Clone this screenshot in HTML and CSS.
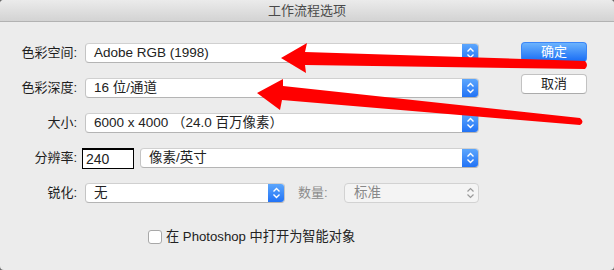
FILE: index.html
```html
<!DOCTYPE html>
<html lang="zh-CN">
<head>
<meta charset="utf-8">
<title>工作流程选项</title>
<link rel="stylesheet" href="styles.css">
</head>
<body>
<div class="window">
  <div class="titlebar">工作流程选项</div>
  <div class="content">
    <div class="form">
      <div class="row">
        <span class="lbl">色彩空间:</span>
        <div class="select w-full"><span class="val">Adobe RGB (1998)</span><span class="stepper"><svg width="17" height="20" viewBox="0 0 17 20"><path d="M5.5 8.5 L8.5 5.5 L11.5 8.5 M5.5 11.5 L8.5 14.5 L11.5 11.5" fill="none" stroke="#fff" stroke-width="1.4"/></svg></span></div>
      </div>
      <div class="row">
        <span class="lbl">色彩深度:</span>
        <div class="select w-full"><span class="val">16 位/通道</span><span class="stepper"><svg width="17" height="20" viewBox="0 0 17 20"><path d="M5.5 8.5 L8.5 5.5 L11.5 8.5 M5.5 11.5 L8.5 14.5 L11.5 11.5" fill="none" stroke="#fff" stroke-width="1.4"/></svg></span></div>
      </div>
      <div class="row">
        <span class="lbl">大小:</span>
        <div class="select w-full"><span class="val">6000 x 4000 （24.0 百万像素）</span><span class="stepper"><svg width="17" height="20" viewBox="0 0 17 20"><path d="M5.5 8.5 L8.5 5.5 L11.5 8.5 M5.5 11.5 L8.5 14.5 L11.5 11.5" fill="none" stroke="#fff" stroke-width="1.4"/></svg></span></div>
      </div>
      <div class="row">
        <span class="lbl">分辨率:</span>
        <div class="input">240</div>
        <div class="select w-res"><span class="val">像素/英寸</span><span class="stepper"><svg width="17" height="20" viewBox="0 0 17 20"><path d="M5.5 8.5 L8.5 5.5 L11.5 8.5 M5.5 11.5 L8.5 14.5 L11.5 11.5" fill="none" stroke="#fff" stroke-width="1.4"/></svg></span></div>
      </div>
      <div class="row">
        <span class="lbl">锐化:</span>
        <div class="select w-sharp"><span class="val">无</span><span class="stepper"><svg width="17" height="20" viewBox="0 0 17 20"><path d="M5.5 8.5 L8.5 5.5 L11.5 8.5 M5.5 11.5 L8.5 14.5 L11.5 11.5" fill="none" stroke="#fff" stroke-width="1.4"/></svg></span></div>
        <span class="sub-lbl">数量:</span>
        <div class="select disabled w-amount"><span class="val">标准</span><span class="stepper plain"><svg width="17" height="20" viewBox="0 0 17 20"><path d="M5.5 8.5 L8.5 5.5 L11.5 8.5 M5.5 11.5 L8.5 14.5 L11.5 11.5" fill="none" stroke="#9a9a9a" stroke-width="1.2"/></svg></span></div>
      </div>
      <div class="check-row">
        <span class="checkbox"></span>
        <span class="check-text">在 Photoshop 中打开为智能对象</span>
      </div>
    </div>
    <div class="actions">
      <button class="btn primary">确定</button>
      <button class="btn">取消</button>
    </div>
  </div>
  <svg class="arrows" width="614" height="270" viewBox="0 0 614 270">
    <path d="M281 58 L307 43 L305 52 L585 61 Q589 65 585 69 L305 65 L306 73 Z" fill="#ff0000"/>
    <path d="M257 93 L283 79 L283 86 L580 118 Q585 122 580 125 L282 100 L280 110 Z" fill="#ff0000"/>
  </svg>
</div>
</body>
</html>
```
FILE: styles.css
```css
* { box-sizing: border-box; }
html, body { margin: 0; padding: 0; }
body {
  background: #6a6a6a;
  font-family: "Liberation Sans", "Noto Sans CJK SC", sans-serif;
  font-size: 13px;
  color: #222;
}
.window {
  position: relative;
  width: 614px;
  height: 270px;
  background: #ececec;
  border-radius: 4px;
  overflow: hidden;
}
.titlebar {
  height: 22px;
  line-height: 21px;
  text-align: center;
  color: #4a4a4a;
  font-size: 13px;
  background: linear-gradient(#ebebeb, #d3d3d3);
  border-bottom: 1px solid #b2b2b2;
}
.content {
  display: flex;
  align-items: flex-start;
}
.form {
  width: 479px;
  padding-top: 21px;
  display: flex;
  flex-direction: column;
  gap: 15px;
}
.row {
  display: flex;
  align-items: flex-start;
  height: 20px;
}
.lbl {
  width: 78px;
  text-align: right;
  line-height: 20px;
  color: #1e1e1e;
  padding-right: 1px;
}
.select {
  margin-left: 7px;
  height: 20px;
  display: flex;
  align-items: center;
  justify-content: space-between;
  background: #fff;
  border: 1px solid #c4c4c4;
  border-top-color: #d0d0d0;
  border-bottom-color: #b4b4b4;
  border-radius: 4px;
  overflow: hidden;
}
.val {
  padding-left: 8px;
  line-height: 18px;
  font-size: 13.5px;
  white-space: nowrap;
}
.stepper {
  width: 17px;
  height: 20px;
  margin: -1px -1px -1px 0;
  display: flex;
  background: linear-gradient(#5fa9fd, #1f70f5);
  border-radius: 0 4px 4px 0;
}
.stepper.plain { background: none; }
.w-full { width: 394px; }
.w-res { width: 339px; margin-left: 6px; }
.w-sharp { width: 200px; }
.input {
  margin-left: 4px;
  width: 52px;
  height: 21px;
  background: #fff;
  border: 1px solid #000;
  border-top-width: 2px;
  padding-left: 3px;
  line-height: 18px;
  font-size: 14px;
}
.sub-lbl {
  margin-left: 13px;
  width: 46px;
  line-height: 20px;
  color: #8c8c8c;
}
.select.disabled {
  margin-left: 0;
  background: #f4f4f4;
  border-color: #d2d2d2;
  color: #888;
}
.select.disabled .val { padding-left: 9px; }
.w-amount { width: 135px; }
.check-row {
  margin-top: 11px;
  padding-left: 148px;
  display: flex;
  align-items: center;
  height: 16px;
}
.checkbox {
  width: 14px;
  height: 14px;
  background: #fff;
  border: 1px solid #a8a8a8;
  border-radius: 3px;
}
.check-text {
  margin-left: 4px;
  line-height: 16px;
  font-size: 13.2px;
}
.actions {
  margin-left: 42px;
  padding-top: 20px;
  display: flex;
  flex-direction: column;
  gap: 12px;
}
.btn {
  width: 66px;
  height: 20px;
  padding: 0;
  font: inherit;
  line-height: 18px;
  color: #222;
  background: #fff;
  border: 1px solid #c2c2c2;
  border-bottom-color: #ababab;
  border-radius: 4px;
}
.btn.primary {
  color: #fff;
  background: linear-gradient(#6cb3fd, #1a6ef5);
  border-color: #3b86f7;
  border-bottom-color: #1b5fd8;
}
.arrows {
  position: absolute;
  left: 0;
  top: 0;
  pointer-events: none;
}
```
